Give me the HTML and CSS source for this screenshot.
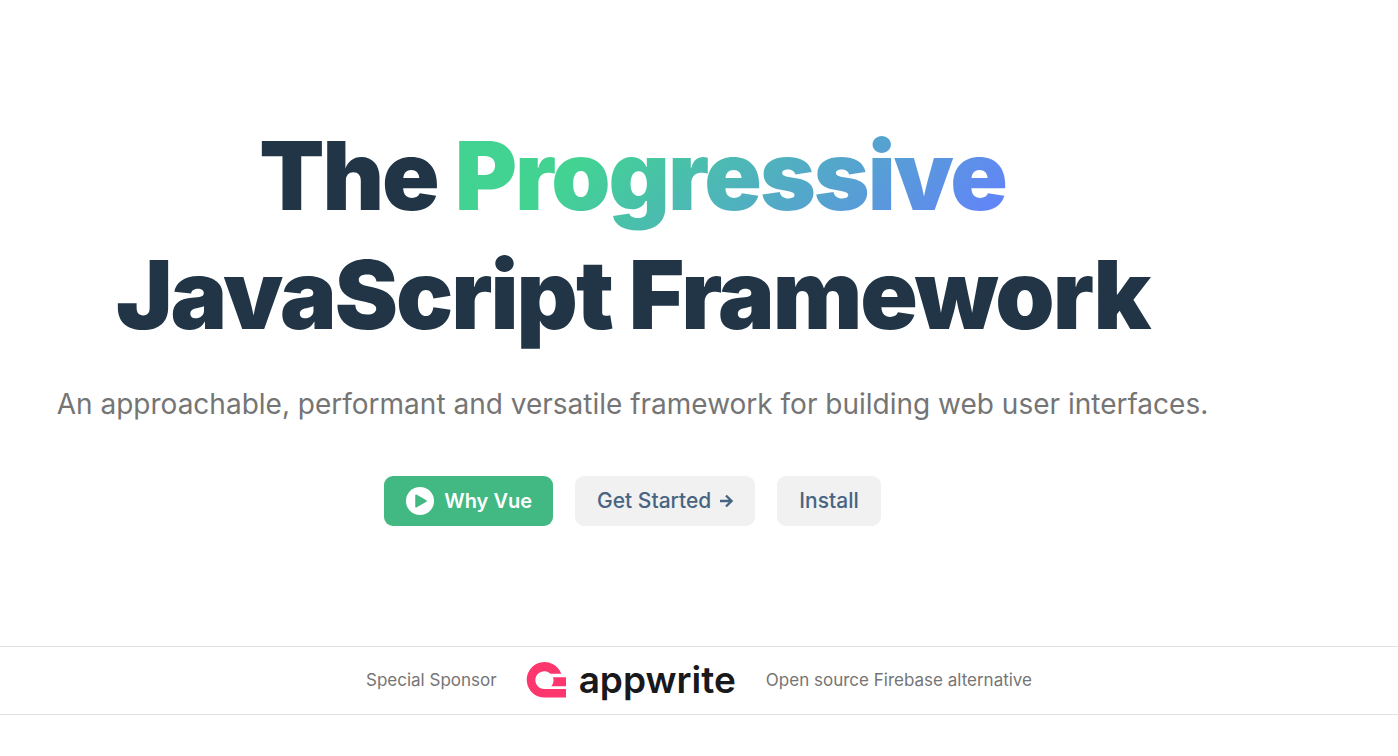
FILE: index.html
```html
<!DOCTYPE html>
<html lang="en">
<head>
<meta charset="utf-8">
<meta name="viewport" content="width=device-width, initial-scale=1">
<title>Vue.js</title>
<link rel="stylesheet" href="styles.css">
</head>
<body>
<main>
  <section class="hero">
    <h1 class="tagline">The <span class="accent">Progressive</span><br>JavaScript Framework</h1>
    <p class="description">An approachable, performant and versatile framework for building web user interfaces.</p>
    <div class="actions">
      <button class="btn primary" type="button">
        <svg class="play" viewBox="0 0 28 28" aria-hidden="true"><circle cx="14" cy="14" r="14" fill="#fff"/><path d="M10 8.200v11.600L20 14z" fill="#42b883" stroke="#42b883" stroke-width="1.500" stroke-linejoin="round"/></svg>
        Why Vue
      </button>
      <a class="btn" href="#start">Get Started
        <svg class="arrow" viewBox="0 0 14 14" aria-hidden="true"><path d="M1 7h11M7 1.500L12.500 7 7 12.500" fill="none" stroke="currentColor" stroke-width="2.300"/></svg>
      </a>
      <a class="btn" href="#install">Install</a>
    </div>
  </section>
  <section class="sponsor">
    <span>Special Sponsor</span>
    <a class="logo" href="#appwrite">
      <svg class="mark" viewBox="0 0 39 36" aria-hidden="true"><path d="M39 27v8.600H17.800A17.800 17.800 0 1 1 34.300 11.800H23.500A8.900 8.900 0 1 0 17.300 27zM26 15.200H39v9H24.300a9.500 9.500 0 0 0 1.700-9z" fill="#fd366e"/></svg>
      <span class="word">appwrite</span>
    </a>
    <span>Open source Firebase alternative</span>
  </section>
</main>
</body>
</html>
```
FILE: styles.css
```css
* { box-sizing: border-box; }
body { margin: 0; background: #fff; color: #213547; font-family: Inter, sans-serif; }
.hero { padding: 116px 133px 120px 0; text-align: center; }
.tagline { margin: 0; font-size: 95px; line-height: 119px; font-weight: 900; letter-spacing: -2px; }
.accent { background: linear-gradient(135deg, #42d392 25%, #647eff); background-clip: text; -webkit-background-clip: text; color: transparent; }
.description { margin: 30px 0 51px; font-size: 28px; line-height: 41px; color: #757575; font-weight: 400; }
.actions { display: flex; justify-content: center; gap: 22px; }
.btn { display: flex; align-items: center; gap: 8px; height: 50px; padding: 0 22px; border: 0; border-radius: 9px; background: #f1f1f1; color: #476582; font: 500 21px/30px Inter, sans-serif; text-decoration: none; }
.primary { background: #42b883; color: #fff; gap: 10px; padding: 0 21px 0 22px; font-size: 20px; font-weight: 600; }
.play { width: 28px; height: 28px; }
.arrow { width: 14px; height: 14px; }
.sponsor { display: flex; align-items: center; justify-content: center; height: 69px; padding-bottom: 2px; gap: 30px; border: solid #e2e2e2; border-width: 1px 0; color: #757575; font-size: 17px; }
.logo { display: flex; align-items: center; gap: 13px; color: #19191c; text-decoration: none; }
.mark { width: 39px; height: 36px; overflow: visible; }
.word { font-size: 37px; font-weight: 600; line-height: 44px; }
```
